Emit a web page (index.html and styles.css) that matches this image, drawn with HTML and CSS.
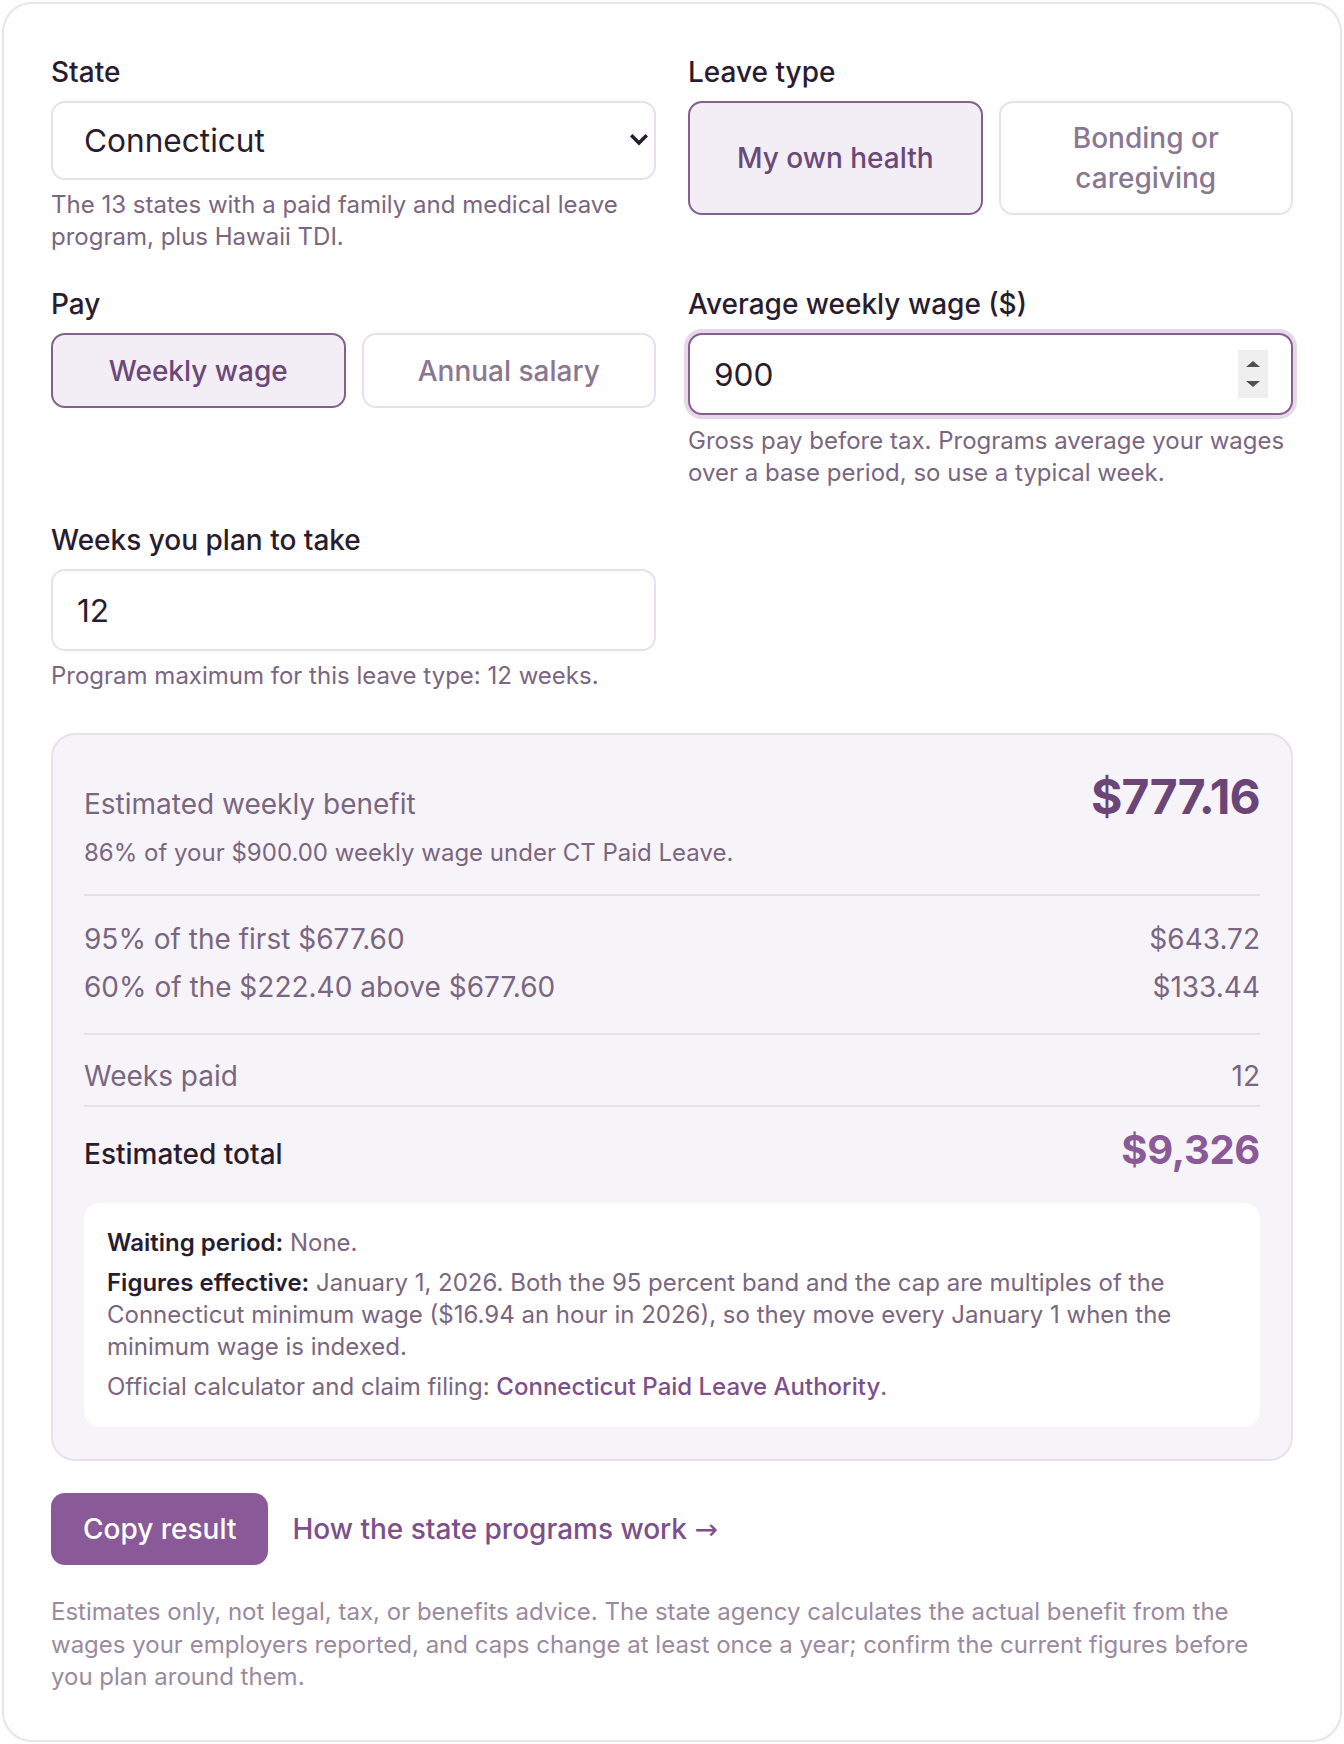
FILE: index.html
```html
<!DOCTYPE html>
<html lang="en">
<head>
<meta charset="utf-8">
<title>Paid leave benefit calculator</title>
<link rel="stylesheet" href="styles.css">
</head>
<body>
<main class="card">
  <div class="fields">
    <div class="field">
      <label class="label" for="state">State</label>
      <div class="select-wrap">
        <select id="state" class="control select">
          <option>Connecticut</option>
        </select>
        <svg class="chevron" width="18" height="12" viewBox="0 0 18 12" aria-hidden="true"><path d="M2.5 2.5 9 9l6.5-6.5" fill="none" stroke="currentColor" stroke-width="3.6" stroke-linecap="square"/></svg>
      </div>
      <p class="help">The 13 states with a paid family and medical leave program, plus Hawaii TDI.</p>
    </div>

    <div class="field">
      <span class="label">Leave type</span>
      <div class="toggles">
        <button class="toggle is-on" type="button">My own health</button>
        <button class="toggle" type="button">Bonding or caregiving</button>
      </div>
    </div>

    <div class="field">
      <span class="label">Pay</span>
      <div class="toggles">
        <button class="toggle toggle-short is-on" type="button">Weekly wage</button>
        <button class="toggle toggle-short" type="button">Annual salary</button>
      </div>
    </div>

    <div class="field">
      <label class="label" for="wage">Average weekly wage ($)</label>
      <div class="input-wrap">
        <input id="wage" class="control input is-focus" type="text" value="900">
        <span class="spinner" aria-hidden="true"><i class="tri tri-up"></i><i class="tri tri-down"></i></span>
      </div>
      <p class="help">Gross pay before tax. Programs average your wages over a base period, so use a typical week.</p>
    </div>

    <div class="field">
      <label class="label" for="weeks">Weeks you plan to take</label>
      <input id="weeks" class="control input" type="text" value="12">
      <p class="help">Program maximum for this leave type: 12 weeks.</p>
    </div>
  </div>

  <section class="result">
    <div class="result-head">
      <span class="result-label">Estimated weekly benefit</span>
      <span class="result-amount">$777.16</span>
    </div>
    <p class="result-sub">86% of your $900.00 weekly wage under CT Paid Leave.</p>

    <div class="breakdown">
      <div class="row"><span>95% of the first $677.60</span><span>$643.72</span></div>
      <div class="row"><span>60% of the $222.40 above $677.60</span><span>$133.44</span></div>
    </div>

    <div class="row weeks"><span>Weeks paid</span><span>12</span></div>

    <div class="total">
      <span class="total-label">Estimated total</span>
      <span class="total-amount">$9,326</span>
    </div>

    <div class="note">
      <p><strong>Waiting period:</strong> None.</p>
      <p><strong>Figures effective:</strong> January 1, 2026. Both the 95 percent band and the cap are multiples of the Connecticut minimum wage ($16.94 an hour in 2026), so they move every January 1 when the minimum wage is indexed.</p>
      <p>Official calculator and claim filing: <a href="#" class="link">Connecticut Paid Leave Authority</a>.</p>
    </div>
  </section>

  <div class="actions">
    <button class="btn" type="button">Copy result</button>
    <a href="#" class="more">How the state programs work <span class="arrow">→</span></a>
  </div>

  <p class="disclaimer">Estimates only, not legal, tax, or benefits advice. The state agency calculates the actual benefit from the wages your employers reported, and caps change at least once a year; confirm the current figures before you plan around them.</p>
</main>
</body>
</html>
```

FILE: styles.css
```css
* { box-sizing: border-box; }

html, body {
  margin: 0;
  padding: 0;
  background: #ffffff;
}

body {
  padding: 2px;
  font-family: Inter, "Noto Sans", "Liberation Sans", sans-serif;
  font-size: 24px;
  line-height: 32px;
  color: #2a1c2f;
}

.card {
  border: 2px solid #e9e3ec;
  border-radius: 30px;
  background: #ffffff;
  padding: 49px 47px 46px;
}

/* form grid */
.fields {
  display: grid;
  grid-template-columns: 1fr 1fr;
  column-gap: 32px;
  row-gap: 32px;
  align-items: start;
}

.field {
  display: flex;
  flex-direction: column;
  min-width: 0;
}

.label {
  display: block;
  font-size: 28px;
  line-height: 38px;
  font-weight: 500;
  color: #2a1c2f;
  margin-bottom: 10px;
}

.control {
  display: block;
  width: 100%;
  font-family: inherit;
  font-size: 31.6px;
  color: #2a1c2f;
  background: #ffffff;
  border: 2px solid #e8e1eb;
  border-radius: 14px;
  outline: none;
  margin: 0;
}

.select-wrap,
.input-wrap {
  position: relative;
}

.select {
  appearance: none;
  -webkit-appearance: none;
  height: 79px;
  padding: 0 48px 0 31px;
  line-height: 1.3;
}

.chevron {
  position: absolute;
  right: 8px;
  top: 33px;
  color: #2a1c2f;
  pointer-events: none;
}

.input {
  height: 82px;
  padding: 0 24px;
  line-height: 1.3;
}

.input.is-focus {
  border-color: #83618f;
  box-shadow: 0 0 0 4px #e6d8ea;
}

.spinner {
  position: absolute;
  right: 25px;
  top: 17px;
  width: 30px;
  height: 48px;
  background: #efefef;
  display: flex;
  flex-direction: column;
  align-items: center;
  justify-content: center;
  gap: 14px;
}

.tri {
  display: block;
  width: 0;
  height: 0;
  border-left: 7px solid transparent;
  border-right: 7px solid transparent;
}

.tri-up { border-bottom: 6px solid #505050; }
.tri-down { border-top: 6px solid #505050; }

.help {
  margin: 9px 0 0;
  font-size: 24px;
  line-height: 32px;
  color: #7a6681;
}

.input-wrap + .help { margin-top: 10px; }

/* toggles */
.toggles {
  display: grid;
  grid-template-columns: 1fr 1fr;
  gap: 16px;
}

.toggle {
  font-family: inherit;
  font-size: 28px;
  line-height: 40px;
  font-weight: 500;
  color: #8a7790;
  background: #ffffff;
  border: 2px solid #e8e1eb;
  border-radius: 14px;
  padding: 15px 30px;
  min-height: 114px;
  text-align: center;
  cursor: pointer;
}

.toggle-short {
  min-height: 75px;
  padding: 15px 16px;
}

.toggle.is-on {
  background: #f3edf5;
  border-color: #83618f;
  color: #6b4878;
}

/* result */
.result {
  margin-top: 41px;
  background: #f7f4f9;
  border: 2px solid #e8e1eb;
  border-radius: 24px;
  padding: 34px 31px 32px;
}

.result-head {
  display: flex;
  justify-content: space-between;
  align-items: baseline;
  gap: 24px;
}

.result-label {
  font-size: 28px;
  color: #7a6681;
}

.result-amount {
  font-size: 48px;
  line-height: 56px;
  font-weight: 700;
  letter-spacing: -0.8px;
  color: #6b4577;
}

.result-sub {
  margin: 11px 0 0;
  font-size: 24px;
  line-height: 34px;
  color: #7a6681;
}

.breakdown {
  margin-top: 24px;
  border-top: 2px solid #e6dfe9;
  border-bottom: 2px solid #e6dfe9;
  padding: 19px 0 21px;
}

.row {
  display: flex;
  justify-content: space-between;
  gap: 24px;
  font-size: 28px;
  line-height: 38.4px;
  padding: 5px 0;
  color: #7a6681;
}

.row.weeks {
  padding: 22px 0 10px;
}

.total {
  border-top: 2px solid #e6dfe9;
  padding-top: 15px;
  display: flex;
  justify-content: space-between;
  align-items: baseline;
  gap: 24px;
}

.total-label {
  font-size: 28px;
  font-weight: 500;
  color: #2a1c2f;
}

.total-amount {
  font-size: 40px;
  line-height: 56px;
  font-weight: 700;
  letter-spacing: -0.3px;
  color: #8a5a98;
}

.note {
  margin-top: 25px;
  background: #ffffff;
  border-radius: 16px;
  padding: 24px 23px 24px;
  color: #7a6681;
  font-size: 24px;
  line-height: 32px;
}

.note p { margin: 0; }
.note p + p { margin-top: 8px; }

.note strong {
  font-weight: 600;
  color: #2a1c2f;
}

.link {
  color: #7d4f8c;
  font-weight: 500;
  text-decoration: none;
}

/* actions */
.actions {
  margin-top: 32px;
  display: flex;
  align-items: center;
  gap: 24px;
}

.btn {
  font-family: inherit;
  font-size: 28px;
  line-height: 38px;
  font-weight: 500;
  color: #ffffff;
  background: #8a5a98;
  border: 0;
  border-radius: 14px;
  padding: 17px 32px;
  cursor: pointer;
}

.more {
  font-size: 28px;
  font-weight: 500;
  color: #7d4f8c;
  text-decoration: none;
}

.arrow {
  font-family: "DejaVu Sans", "Liberation Sans", sans-serif;
  font-weight: 400;
}

.disclaimer {
  margin: 31px 0 0;
  font-size: 24px;
  line-height: 32.5px;
  color: #9a8aa0;
}
```
